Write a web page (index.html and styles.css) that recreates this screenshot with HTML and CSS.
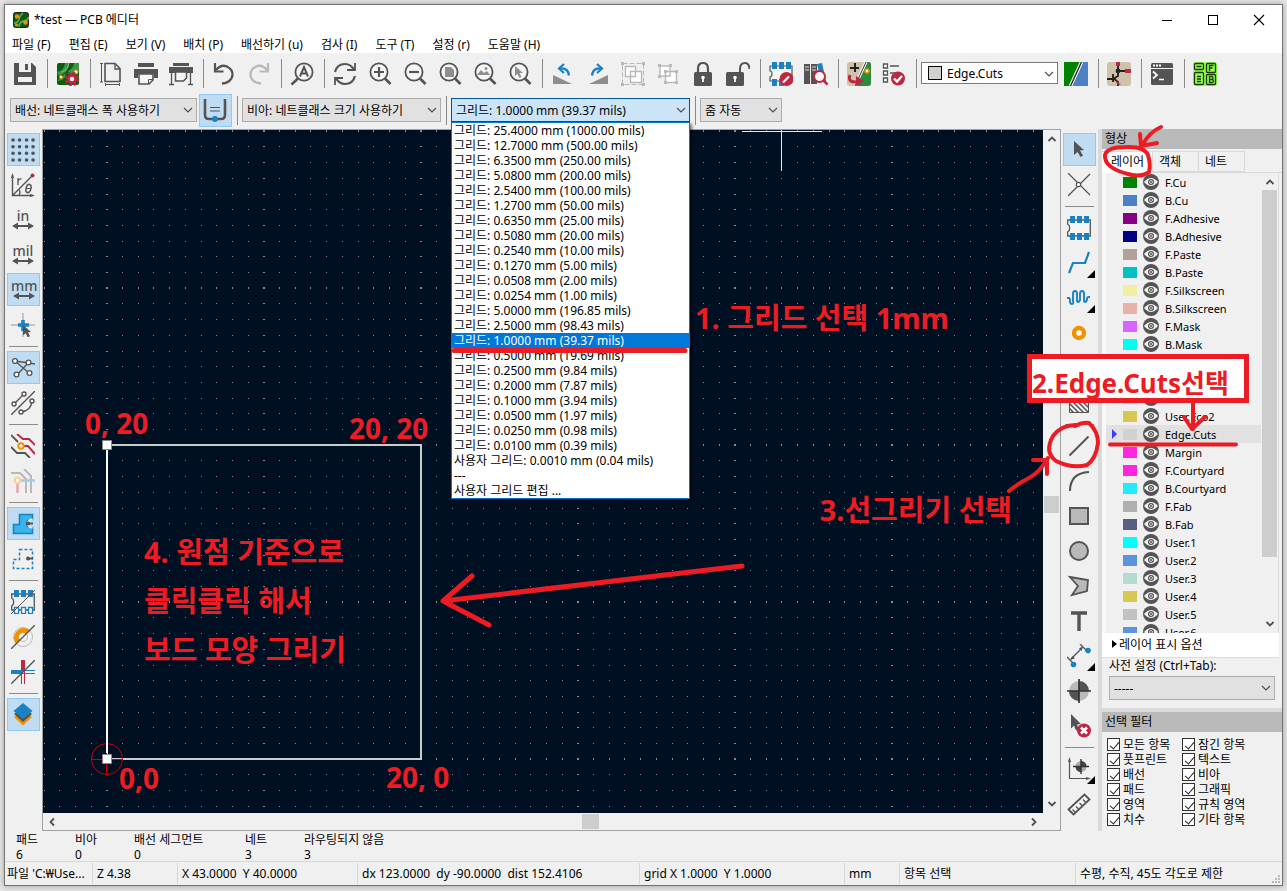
FILE: index.html
```html
<!DOCTYPE html>
<html lang="ko">
<head>
<meta charset="utf-8">
<title>*test — PCB 에디터</title>
<link rel="stylesheet" href="styles.css">
</head>
<body>
<svg class="defs" aria-hidden="true">
  <symbol id="eye" viewBox="0 0 16 16"><circle cx="8" cy="8" r="8" fill="#545454"/><path d="M1 8Q8 0 15 8Q8 16 1 8z" fill="#f0f0f0"/><circle cx="8" cy="8" r="3" fill="#545454"/><circle cx="8" cy="8" r="1.5" fill="#545454" stroke="#ddd" stroke-width=".9"/></symbol>
  <symbol id="chev" viewBox="0 0 10 6"><path d="M1 1l4 4 4-4" fill="none" stroke="#505050" stroke-width="1.2"/></symbol>
  <symbol id="lens" viewBox="0 0 24 24"><circle cx="11" cy="10" r="8.6" fill="#f5f5f5" stroke="#545454" stroke-width="1.8"/><path d="M17 16.500l5.500 5.500" stroke="#545454" stroke-width="2.600"/></symbol>
  <symbol id="arrows" viewBox="0 0 24 24"><path d="M4 19h16" stroke="#545454" stroke-width="2"/><path d="M1 19l6-3.500v7zM23 19l-6-3.500v7z" fill="#545454"/></symbol>
  <pattern id="dots" width="157" height="157" patternUnits="userSpaceOnUse" patternTransform="translate(107 131)">
    <g fill="none" stroke="#858b8e"><path id="dr" d="M0 .5h1M15 .5h1M31 .5h1M46 .5h1M62 .5h1M78 .5h1M94 .5h1M109 .5h1M125 .5h1M141 .5h1M156 .5h1"/>
    <use href="#dr" y="15"/><use href="#dr" y="31"/><use href="#dr" y="47"/><use href="#dr" y="63"/><use href="#dr" y="78"/><use href="#dr" y="94"/><use href="#dr" y="110"/><use href="#dr" y="125"/><use href="#dr" y="141"/><use href="#dr" y="156"/></g>
  </pattern>
  <pattern id="hatch" width="5" height="5" patternUnits="userSpaceOnUse"><path d="M0 0l5 5M-1 4l2 2M4-1l2 2" stroke="#545454" stroke-width="1.500"/></pattern>
</svg>

<div class="window">
  <header class="titlebar">
    <svg class="appicon" viewBox="0 0 16 16"><rect x=".5" y=".5" width="15" height="15" rx="2" fill="#075b12" stroke="#222"/><path d="M1 11q4 0 5-4t4-6M6 15q0-5 5-6t4-4" fill="none" stroke="#52a552" stroke-width="1.800"/><circle cx="4" cy="4.500" r="2.200" fill="#f29100"/><circle cx="3.500" cy="13" r="1.600" fill="#f29100"/><circle cx="12.500" cy="10.500" r="2.200" fill="#f29100"/></svg>
    <h1>*test — PCB 에디터</h1>
    <div class="winbtns">
      <button aria-label="최소화"><svg viewBox="0 0 12 12"><path d="M1 6.500h10" stroke="#000"/></svg></button>
      <button aria-label="최대화"><svg viewBox="0 0 12 12"><rect x="1.500" y="1.500" width="9" height="9" fill="none" stroke="#000"/></svg></button>
      <button aria-label="닫기"><svg viewBox="0 0 12 12"><path d="M1 1l10 10M11 1L1 11" stroke="#000" stroke-width="1.100"/></svg></button>
    </div>
  </header>
  <nav class="menubar">
    <button>파일 (F)</button><button>편집 (E)</button><button>보기 (V)</button><button>배치 (P)</button><button>배선하기 (u)</button><button>검사 (I)</button><button>도구 (T)</button><button>설정 (r)</button><button>도움말 (H)</button>
  </nav>

  <div class="toolbar main-tools">
    <button class="tool" aria-label="저장"><svg viewBox="0 0 24 24"><path d="M1 1h18l4 4v18H1z" fill="#545454"/><path d="M6 1h12v9H6zM5 15h14v5H5z" fill="#f0f0f0"/><path d="M12 2h3v6h-3z" fill="#545454"/></svg></button>
    <i class="sep"></i>
    <button class="tool" aria-label="보드 설정"><svg viewBox="0 0 24 24"><rect x="1" y="1" width="22" height="22" rx="2" fill="#0a5e10"/><path d="M1 10q7-1 8-9h4q0 9-10 13M12 9q5-2 6-8h5v8l-9 3M1 19q8 0 9-8" fill="#3f9446"/><path d="M13 1q-1 7-7 9" fill="none" stroke="#8cc08c"/><circle cx="5" cy="15" r="1.500" fill="#fff" stroke="#f29100"/><circle cx="20" cy="10" r="2" fill="#fff" stroke="#f29100"/><circle cx="16" cy="17" r="6" fill="none" stroke="#bf2641" stroke-width="2.500" stroke-dasharray="2.700 2"/><circle cx="16" cy="17" r="3.600" fill="#eee" stroke="#bf2641" stroke-width="2.600"/></svg></button>
    <i class="sep"></i>
    <button class="tool" aria-label="페이지 설정"><svg viewBox="0 0 24 24" fill="none" stroke="#545454"><path d="M6 1.500h10l5 5v13H6z" stroke-width="1.600"/><path d="M16 2v5h5" stroke-width="1.300"/><path d="M2.500 1v19M1 1.500h3M1 20h3M6 22.500h15M6.500 21v3M20.500 21v3"/></svg></button>
    <button class="tool" aria-label="인쇄"><svg viewBox="0 0 24 24"><path d="M4 1h16v4H4z" fill="#545454"/><path d="M0 7h24v9h-4v-4H4v4H0z" fill="#545454"/><path d="M5 12h14v6l-4 4H5z" fill="#f5f5f5" stroke="#545454" stroke-width="1.600"/><path d="M14.500 22v-4.500H19" fill="none" stroke="#545454"/></svg></button>
    <button class="tool" aria-label="플롯"><svg viewBox="0 0 24 24"><path d="M4 1h16v3H4zM0 5h24v6H0z" fill="#545454"/><path d="M2.500 11v12M21.500 11v12M0 22.500h5M19 22.500h5" stroke="#545454" stroke-width="1.300"/><path d="M6.500 10h11v6l-3 3h-8z" fill="#f5f5f5" stroke="#545454" stroke-width="1.500"/></svg></button>
    <i class="sep"></i>
    <button class="tool" aria-label="실행 취소"><svg viewBox="0 0 24 24" fill="none" stroke="#545454" stroke-width="2.300"><path d="M4 8Q9 2 15 4.500q6 3 5.500 9Q19 21 10 21.500"/><path d="M3 1v8.500h8.500" stroke-width="2.200"/></svg></button>
    <button class="tool" aria-label="다시 실행"><svg viewBox="0 0 24 24" fill="none" stroke="#b9b9b9" stroke-width="2.300"><path d="M20 8Q15 2 9 4.500q-6 3-5.500 9Q5 21 14 21.500"/><path d="M21 1v8.500h-8.500" stroke-width="2.200"/></svg></button>
    <i class="sep"></i>
    <button class="tool" aria-label="찾기"><svg viewBox="0 0 24 24"><circle cx="14" cy="10" r="8.600" fill="#f5f5f5" stroke="#545454" stroke-width="1.800"/><path d="M8 16.500L1.500 22.500" stroke="#545454" stroke-width="2.600"/><path d="M10 14.500l4-9.500 4 9.500M11.500 11.500h5" fill="none" stroke="#545454" stroke-width="2"/></svg></button>
    <i class="sep"></i>
    <button class="tool" aria-label="새로 고침"><svg viewBox="0 0 24 24" fill="none" stroke="#545454" stroke-width="2.200"><path d="M2 10Q4 2 12 2q6 0 9 6M22 14q-2 8-10 8-6 0-9-6"/><path d="M22 1v7h-8M2 23v-7h8" stroke-width="1.800"/></svg></button>
    <button class="tool" aria-label="확대"><svg viewBox="0 0 24 24"><use href="#lens"/><path d="M6 10h10M11 5v10" stroke="#545454" stroke-width="2.200"/></svg></button>
    <button class="tool" aria-label="축소"><svg viewBox="0 0 24 24"><use href="#lens"/><path d="M6 10h10" stroke="#545454" stroke-width="2.200"/></svg></button>
    <button class="tool" aria-label="화면에 맞추기"><svg viewBox="0 0 24 24"><use href="#lens"/><path d="M7 5h6l3 3v7H7z" fill="#8e8e8e"/></svg></button>
    <button class="tool" aria-label="객체에 맞추기"><svg viewBox="0 0 24 24"><use href="#lens"/><path d="M4 13l4-5 3 3 3-2 3 4z" fill="#8e8e8e"/><circle cx="13" cy="6.500" r="1.500" fill="#8e8e8e"/></svg></button>
    <button class="tool" aria-label="선택 확대"><svg viewBox="0 0 24 24"><use href="#lens"/><path d="M7 4l8 7h-3.500l2 4-2 1-2-4L7 14z" fill="#8e8e8e"/></svg></button>
    <i class="sep"></i>
    <button class="tool" aria-label="반시계 회전"><svg viewBox="0 0 24 24"><path d="M2 13l19 9H2z" fill="#8e8e8e"/><path d="M9 6.500q8-1 9 7" fill="none" stroke="#1a81c4" stroke-width="2.400"/><path d="M13 2L8 6.500l5 4.500" fill="none" stroke="#1a81c4" stroke-width="2.200"/></svg></button>
    <button class="tool" aria-label="시계 회전"><svg viewBox="0 0 24 24"><path d="M22 13L3 22h19z" fill="#8e8e8e"/><path d="M15 6.500q-8-1-9 7" fill="none" stroke="#1a81c4" stroke-width="2.400"/><path d="M11 2l5 4.500-5 4.500" fill="none" stroke="#1a81c4" stroke-width="2.200"/></svg></button>
    <button class="tool" aria-label="그룹"><svg viewBox="0 0 24 24" fill="#fff" stroke="#b9b9b9"><path d="M1.500 1.500h21v21h-21z" fill="none" stroke-dasharray="5 2"/><path d="M4.500 4.500h10v10h-10zM9.500 9.500h11v11h-11z" stroke-width="1.400"/><path d="M0 0h3v3H0zM21 0h3v3h-3zM0 21h3v3H0zM21 21h3v3h-3z" fill="#b9b9b9" stroke="none"/></svg></button>
    <button class="tool" aria-label="그룹 해제"><svg viewBox="0 0 24 24" fill="#fff" stroke="#b9b9b9"><path d="M4 4h10v10H4zM9.500 9.500h11v11h-11z" stroke-width="1.400"/><path d="M2 2h3v3H2zM13 2h3v3h-3zM2 13h3v3H2zM8 8h3v3H8zM19 8h3v3h-3zM8 19h3v3H8zM19 19h3v3h-3z" fill="#b9b9b9" stroke="none"/></svg></button>
    <button class="tool" aria-label="잠금"><svg viewBox="0 0 24 24"><path d="M7 12V7q0-6 5-6t5 6v5" fill="none" stroke="#545454" stroke-width="2.200"/><rect x="3" y="10" width="18" height="14" rx="1.500" fill="#545454"/><circle cx="12" cy="15.500" r="1.800" fill="#fff"/><path d="M12 15v5" stroke="#fff" stroke-width="1.800"/></svg></button>
    <button class="tool" aria-label="잠금 해제"><svg viewBox="0 0 24 24"><path d="M14 11V7q0-6 5-6 4 0 4.500 6" fill="none" stroke="#545454" stroke-width="2"/><rect x="0" y="10" width="18" height="14" rx="1.500" fill="#545454"/><circle cx="9" cy="15.500" r="1.800" fill="#fff"/><path d="M9 15v5" stroke="#fff" stroke-width="1.800"/></svg></button>
    <i class="sep"></i>
    <button class="tool" aria-label="풋프린트 편집기"><svg viewBox="0 0 24 24"><path d="M1 4h22v15H1v-4q2 0 2-3t-2-3z" fill="#f5f5f5" stroke="#545454" stroke-width="1.200"/><path d="M3 0h5v7H3zM10 0h5v7h-5zM17 0h5v7h-5zM3 17h5v7H3zM10 17h5v7h-5z" fill="#1a81c4"/><circle cx="17.500" cy="17" r="7" fill="#bf2641"/><path d="M14 20.500l6-6" stroke="#fff" stroke-width="2.200"/></svg></button>
    <button class="tool" aria-label="라이브러리 찾아보기"><svg viewBox="0 0 24 24"><path d="M0 2h6v20H0zM7 2h6v20H7z" fill="#545454"/><path d="M1 5h4M1 8h4M8 5h4M8 8h4" stroke="#ddd"/><path d="M13 2l5-1 4 18-5 1z" fill="#1a81c4"/><circle cx="15.500" cy="14.500" r="5.500" fill="#f5f5f5" stroke="#bf2641" stroke-width="2"/><path d="M19.500 18.500l4 4" stroke="#bf2641" stroke-width="2.600"/></svg></button>
    <i class="sep"></i>
    <button class="tool" aria-label="회로도에서 업데이트"><svg viewBox="0 0 24 24"><rect width="24" height="24" rx="3" fill="#cfc2a8"/><path d="M19 0h3q2 0 2 3v18q0 3-3 3H7z" fill="#2e8b3a"/><path d="M19 0L8 24" stroke="#fff" stroke-width="3"/><path d="M19 0L8 24" stroke="#333"/><path d="M8 1v9M3 6h9" stroke="#222" stroke-width="2"/><circle cx="20" cy="9" r="2" fill="#fff" stroke="#f29100" stroke-width="1.500"/><path d="M3 13q-3 8 8 7" fill="none" stroke="#bf2641" stroke-width="3"/><path d="M9 14l8 5-8 5z" fill="#bf2641"/></svg></button>
    <button class="tool" aria-label="설계 규칙 검사"><svg viewBox="0 0 24 24"><path d="M1.500 2h4v4h-4zM1.500 9h4v4h-4zM1.500 16h4v4h-4z" fill="#fff" stroke="#545454" stroke-width="1.300"/><path d="M8 4h9M8 11h5" stroke="#545454" stroke-width="1.500"/><circle cx="16" cy="16.500" r="7" fill="#bf2641"/><path d="M12 16.500l3 3 5-5.500" fill="none" stroke="#fff" stroke-width="2.400"/></svg></button>
    <i class="sep"></i>
    <span class="combo layer-combo"><i class="chip"></i><select aria-label="활성 레이어"><option>Edge.Cuts</option></select><svg class="chev"><use href="#chev"/></svg></span>
    <button class="tool" aria-label="레이어 쌍"><svg viewBox="0 0 24 24"><path d="M0 0h17L6 24H0z" fill="#008400"/><path d="M18 0h6v24H8z" fill="#4d7fc4"/><path d="M17.500 0L6.500 24" stroke="#fff" stroke-width="3.500"/><path d="M17.500 0L6.500 24" stroke="#333" stroke-width="1.500"/></svg></button>
    <i class="sep"></i>
    <button class="tool" aria-label="회로도 편집기"><svg viewBox="0 0 24 24"><rect width="24" height="24" rx="3" fill="#cfc2a8"/><path d="M11 4v5H18M11 9v5l-5 3H0M6 12v8M6 16l5 4v4" fill="none" stroke="#222" stroke-width="1.800"/><path d="M9 0h4v4H9zM18 7h6v4h-6zM9 18l5 5-4-1z" fill="#bf2641"/><circle cx="11" cy="9" r="2.400" fill="#222"/></svg></button>
    <i class="sep"></i>
    <button class="tool" aria-label="스크립트 콘솔"><svg viewBox="0 0 24 24"><rect x="1" y="1" width="22" height="22" rx="1.500" fill="#545454"/><path d="M1 6.500h22" stroke="#f0f0f0"/><path d="M3 3.500h2M6 3.500h2M9 3.500h2" stroke="#fff" stroke-width="1.800"/><path d="M3 9.500l4 3.500-4 3.500M9 17.500h5" fill="none" stroke="#fff" stroke-width="1.700"/></svg></button>
    <i class="sep"></i>
    <button class="tool" aria-label="플러그인"><svg viewBox="0 0 24 24"><rect width="24" height="24" rx="2.500" fill="#90ff4b"/><g fill="none" stroke="#1f3a10" stroke-width="1.300"><rect x="1.500" y="1.500" width="9" height="6" rx="1"/><rect x="1.500" y="10.500" width="9" height="12" rx="1"/><rect x="13.500" y="1.500" width="9" height="9" rx="1"/><rect x="13.500" y="12.500" width="9" height="10" rx="1"/><path d="M3.500 4.500h5M4 14.500h4M4 17h4M4 19.500h4M16.500 9V3.500h4M16.500 6h3M16.500 14.500v6h2.500q1.500 0 1.500-1.500t-1.500-1.500h-2.500 2q1.500 0 1.500-1.500t-1.500-1.500z"/></g></svg></button>
  </div>

  <div class="toolbar option-tools">
    <span class="combo w-track"><select aria-label="배선 폭"><option>배선: 네트클래스 폭 사용하기</option></select><svg class="chev"><use href="#chev"/></svg></span>
    <button class="tool on" aria-label="자동 폭"><svg viewBox="0 0 24 24"><path d="M2 0v16q0 4 4 4h12q4 0 4-4V0" fill="none" stroke="#545454" stroke-width="2.600"/><path d="M7 8.500h10M7 12h10" stroke="#545454" stroke-width="1.200"/><circle cx="12" cy="20" r="3" fill="#1a81c4"/></svg></button>
    <i class="sep"></i>
    <span class="combo w-via"><select aria-label="비아 크기"><option>비아: 네트클래스 크기 사용하기</option></select><svg class="chev"><use href="#chev"/></svg></span>
    <i class="sep"></i>
    <span class="combo w-grid open"><select aria-label="그리드"><option>그리드: 1.0000 mm (39.37 mils)</option></select><svg class="chev"><use href="#chev"/></svg>
      <ul class="dropdown" role="listbox" aria-label="그리드 목록">
        <li role="option">그리드: 25.4000 mm (1000.00 mils)</li>
        <li role="option">그리드: 12.7000 mm (500.00 mils)</li>
        <li role="option">그리드: 6.3500 mm (250.00 mils)</li>
        <li role="option">그리드: 5.0800 mm (200.00 mils)</li>
        <li role="option">그리드: 2.5400 mm (100.00 mils)</li>
        <li role="option">그리드: 1.2700 mm (50.00 mils)</li>
        <li role="option">그리드: 0.6350 mm (25.00 mils)</li>
        <li role="option">그리드: 0.5080 mm (20.00 mils)</li>
        <li role="option">그리드: 0.2540 mm (10.00 mils)</li>
        <li role="option">그리드: 0.1270 mm (5.00 mils)</li>
        <li role="option">그리드: 0.0508 mm (2.00 mils)</li>
        <li role="option">그리드: 0.0254 mm (1.00 mils)</li>
        <li role="option">그리드: 5.0000 mm (196.85 mils)</li>
        <li role="option">그리드: 2.5000 mm (98.43 mils)</li>
        <li role="option" aria-selected="true">그리드: 1.0000 mm (39.37 mils)</li>
        <li role="option">그리드: 0.5000 mm (19.69 mils)</li>
        <li role="option">그리드: 0.2500 mm (9.84 mils)</li>
        <li role="option">그리드: 0.2000 mm (7.87 mils)</li>
        <li role="option">그리드: 0.1000 mm (3.94 mils)</li>
        <li role="option">그리드: 0.0500 mm (1.97 mils)</li>
        <li role="option">그리드: 0.0250 mm (0.98 mils)</li>
        <li role="option">그리드: 0.0100 mm (0.39 mils)</li>
        <li role="option">사용자 그리드: 0.0010 mm (0.04 mils)</li>
        <li role="option">---</li>
        <li role="option">사용자 그리드 편집 ...</li>
      </ul>
    </span>
    <i class="sep"></i>
    <span class="combo w-zoom"><select aria-label="줌"><option>줌 자동</option></select><svg class="chev"><use href="#chev"/></svg></span>
  </div>

  <main class="workspace">
    <div class="sidebar left">
      <button class="tool on" aria-label="그리드 표시"><svg viewBox="0 0 24 24"><path d="M2 2h.1M8.500 2h.1M15.500 2h.1M22 2h.1M2 8.700h.1M8.500 8.700h.1M15.500 8.700h.1M22 8.700h.1M2 15.300h.1M8.500 15.300h.1M15.500 15.300h.1M22 15.300h.1M2 22h.1M8.500 22h.1M15.500 22h.1M22 22h.1" stroke="#545454" stroke-width="3.600" stroke-linecap="round"/></svg></button>
      <button class="tool" aria-label="극좌표"><svg viewBox="0 0 24 24" fill="none" stroke="#545454"><path d="M1.500 2v20.500H22M2 22L21 3" stroke-width="1.400"/><path d="M1.500 0l-1.500 5h3zM24 22.500l-5-1.500v3z" fill="#545454" stroke="none"/><path d="M7 5v7M7 8q1-2.500 3.500-2M8 17q2 2 0 5" stroke-width="1.300"/><ellipse cx="17.500" cy="15.500" rx="2.400" ry="4.200" stroke-width="1.500" transform="rotate(15 17.500 15.500)"/><path d="M15 15.500h5"/><circle cx="21.500" cy="2.500" r="2" fill="#bf2641" stroke="none"/></svg></button>
      <button class="tool unit"><span>in</span><svg viewBox="0 0 24 24"><use href="#arrows"/></svg></button>
      <button class="tool unit"><span>mil</span><svg viewBox="0 0 24 24"><use href="#arrows"/></svg></button>
      <button class="tool unit on"><span>mm</span><svg viewBox="0 0 24 24"><use href="#arrows"/></svg></button>
      <button class="tool" aria-label="전체 커서"><svg viewBox="0 0 24 24"><path d="M0 12h24M12 0v24" stroke="#999"/><path d="M7 12h11M12 7v11" stroke="#1a81c4" stroke-width="3.600"/><path d="M12 12l8 7-3 .3 2 4-2.300 1-2-4-2.700 2z" fill="#545454"/></svg></button>
      <i class="hsep"></i>
      <button class="tool on" aria-label="래츠네스트"><svg viewBox="0 0 24 24" fill="#fff" stroke="#545454" stroke-width="1.300"><path d="M4 5l14 2 6 1M4 5l14 12M6 19L17 7" fill="none"/><circle cx="4" cy="5" r="2.400"/><circle cx="17.500" cy="6.500" r="2.400"/><circle cx="5.500" cy="18.500" r="2.400"/><circle cx="18.500" cy="17" r="2.400"/></svg></button>
      <button class="tool" aria-label="곡선 래츠네스트"><svg viewBox="0 0 24 24" fill="#fff" stroke="#545454" stroke-width="1.400"><path d="M3 13L13 3M10 21q10-1 11-11M0 24L24 0" fill="none"/><circle cx="13" cy="3" r="2"/><circle cx="3" cy="13" r="2"/><circle cx="21" cy="10" r="2"/><circle cx="10" cy="21" r="2"/></svg></button>
      <i class="hsep"></i>
      <button class="tool" aria-label="고대비"><svg viewBox="0 0 24 24" fill="none" stroke-width="1.900"><path d="M6 0l6 5h6l6 6M12 12h5l7 8" stroke="#bf2641"/><path d="M0 1l7 7M0 13l6 6h8l5 5" stroke="#545454"/><circle cx="10" cy="12" r="2.700" stroke="#f29100"/></svg></button>
      <button class="tool" aria-label="네트 강조"><svg viewBox="0 0 24 24" fill="none" stroke="#b9b9b9" stroke-width="2"><path d="M0 4h9l6 6v14M13 0l7 7v17"/><path d="M9 11.500h15" stroke="#a2cbe6" stroke-width="2.600"/><path d="M6.500 14v10" stroke="#e5a8b3" stroke-width="2.600"/><circle cx="6.500" cy="11.500" r="2.700" fill="#fff" stroke="#fad08e"/></svg></button>
      <i class="hsep"></i>
      <button class="tool on" aria-label="영역 채움"><svg viewBox="0 0 24 24"><path d="M8.500 2.500h13v5q-6 0-6 4t6 4v6h-19v-9h6z" fill="#39b4ea" stroke="#1a81c4" stroke-width="1.600"/><path d="M21.500 7q-5 0-5 4.500t5 4.500" fill="#c0dcf3" stroke="#fff"/><path d="M17 11.500h5" stroke="#545454" stroke-width="2"/><circle cx="17" cy="11.500" r="2" fill="#545454"/></svg></button>
      <button class="tool" aria-label="영역 윤곽"><svg viewBox="0 0 24 24"><path d="M8.500 2.500h13v19h-19v-9h6z" fill="none" stroke="#1a81c4" stroke-width="1.500" stroke-dasharray="3 2"/><path d="M17 11.500h5" stroke="#545454" stroke-width="2"/><circle cx="17" cy="11.500" r="2" fill="#545454"/></svg></button>
      <i class="hsep"></i>
      <button class="tool" aria-label="패드 윤곽"><svg viewBox="0 0 24 24"><path d="M.7 4h22.600v16H.7v-4q2-1 2-4t-2-4z" fill="none" stroke="#545454" stroke-width="1.300"/><path d="M3 0h5v7H3zM10 0h5v7h-5zM17 0h5v7h-5z" fill="#1a81c4"/><path d="M3.500 17.500h4v6h-4zM10.500 17.500h4v6h-4zM17.500 17.500h4v6h-4z" fill="#fff" stroke="#1a81c4" stroke-width="1.300"/><path d="M0 24L24 0" stroke="#545454"/></svg></button>
      <button class="tool" aria-label="비아 윤곽"><svg viewBox="0 0 24 24"><circle cx="12" cy="12" r="9.500" fill="none" stroke="#bbb"/><circle cx="12" cy="12" r="4.500" fill="none" stroke="#bbb"/><path d="M5 19A10 10 0 0 1 19 5l-4 4a4 4 0 0 0-6 6z" fill="#f29100"/><path d="M0 24L24 0" stroke="#545454" stroke-width="1.300"/></svg></button>
      <button class="tool" aria-label="배선 윤곽"><svg viewBox="0 0 24 24"><path d="M12 0v12" stroke="#bf2641" stroke-width="4"/><path d="M0 12h12" stroke="#1a81c4" stroke-width="4"/><path d="M12 10.500h12M12 13.500h12" stroke="#1a81c4"/><path d="M10.500 12v12M13.500 12v12" stroke="#bf2641"/><path d="M0 24L24 0" stroke="#545454" stroke-width="1.300"/></svg></button>
      <i class="hsep"></i>
      <button class="tool on" aria-label="레이어 관리자"><svg viewBox="0 0 24 24"><path d="M3 14l3-2 6 4 6-4 3 2-9 8.500z" fill="#f29100"/><path d="M3 11l3-2 6 4 6-4 3 2-9 8z" fill="#545454"/><path d="M12 0l9.500 8L12 16 2.500 8z" fill="#1a81c4"/></svg></button>
    </div>

    <section class="editor">
      <div class="canvas">
        <svg width="100%" height="100%"><g transform="translate(-43 -130)">
          <rect x="43" y="130" width="3000" height="2000" fill="url(#dots)" shape-rendering="crispEdges"/>
          <path d="M107 445h314v314H107" fill="none" stroke="#c9cdc9" stroke-width="2"/>
          <path d="M107 445v314" stroke="#fff" stroke-width="2"/>
          <circle cx="107" cy="759" r="15.500" fill="none" stroke="#c80000"/><path d="M91 759.500h32M106.500 743v32" stroke="#c80000"/><path d="M106 445h2v308h-2z" fill="#fff"/>
          <path d="M102.500 440.500h9v9h-9zM102.500 754.500h9v9h-9z" fill="#fff" stroke="#888"/>
          <path d="M742 131.500h80M781.500 130v41" stroke="#e8e8e8"/>
        </g></svg>
      </div>
      <div class="scroll v"><svg viewBox="0 0 10 10"><path d="M1.500 7L5 3.500 8.500 7"/></svg><i></i><svg viewBox="0 0 10 10"><path d="M1.500 3L5 6.500 8.500 3"/></svg></div>
      <div class="scroll h"><svg viewBox="0 0 10 10"><path d="M7 1.500L3.500 5 7 8.500"/></svg><i></i><svg viewBox="0 0 10 10"><path d="M3 1.500L6.500 5 3 8.500"/></svg></div>
      <i class="corner"></i>
    </section>

    <div class="sidebar right">
      <button class="tool on" aria-label="선택"><svg viewBox="0 0 24 24"><path d="M7 3l10 9-4 .5 3 5-2.500 1.500-3-5-3.500 3z" fill="#545454"/></svg></button>
      <button class="tool" aria-label="로컬 래츠네스트"><svg viewBox="0 0 24 24" fill="none" stroke="#545454" stroke-width="1.200"><path d="M1 0l22 22M23 1L1 23"/><circle cx="11.500" cy="11.500" r="2.200" fill="#fff"/></svg></button>
      <i class="hsep"></i>
      <button class="tool" aria-label="풋프린트 추가"><svg viewBox="0 0 24 24"><path d="M.7 4h22.600v16H.7v-4q2-1 2-4t-2-4z" fill="#f5f5f5" stroke="#545454" stroke-width="1.300"/><path d="M3 0h5v7H3zM10 0h5v7h-5zM17 0h5v7h-5zM3 17h5v7H3zM10 17h5v7h-5zM17 17h5v7h-5z" fill="#1a81c4"/></svg></button>
      <button class="tool more" aria-label="배선"><svg viewBox="0 0 24 24"><path d="M2 22L6 12h12l4-11" fill="none" stroke="#1a81c4" stroke-width="2.200"/></svg></button>
      <button class="tool more" aria-label="길이 조정"><svg viewBox="0 0 24 24"><path d="M0 12h2q1 0 1 3t2 3 1-3V8q0-3 2-3t2 3v6q0 2 1 2t2-2V8q0-3 2-3t2 3v6q0 2 1 2t2-2v-1q0-2 2-2h1" fill="none" stroke="#1a81c4" stroke-width="1.900"/></svg></button>
      <button class="tool" aria-label="비아"><svg viewBox="0 0 24 24"><circle cx="12" cy="12" r="5" fill="#fff" stroke="#f29100" stroke-width="4.400"/></svg></button>
      <button class="tool" aria-label="영역"><svg viewBox="0 0 24 24"><path d="M3 3h18v18H3z" fill="none" stroke="#545454"/></svg></button>
      <button class="tool" aria-label="규칙 영역"><svg viewBox="0 0 24 24"><path d="M2.500 2.500h19v19h-19z" fill="url(#hatch)" stroke="#545454"/></svg></button>
      <i class="hsep"></i>
      <button class="tool" aria-label="선"><svg viewBox="0 0 24 24"><path d="M2.500 21.500l19-19" stroke="#545454" stroke-width="2"/></svg></button>
      <button class="tool" aria-label="호"><svg viewBox="0 0 24 24"><path d="M3 22Q3 4 22 3" fill="none" stroke="#545454" stroke-width="2"/></svg></button>
      <button class="tool" aria-label="사각형"><svg viewBox="0 0 24 24"><path d="M3 4h18v16H3z" fill="#b9b9b9" stroke="#545454" stroke-width="2"/></svg></button>
      <button class="tool" aria-label="원"><svg viewBox="0 0 24 24"><circle cx="12" cy="12" r="9" fill="#b9b9b9" stroke="#545454" stroke-width="2"/></svg></button>
      <button class="tool" aria-label="다각형"><svg viewBox="0 0 24 24"><path d="M3 3l18 3-1 11-15 4 6-9z" fill="#b9b9b9" stroke="#545454" stroke-width="1.800"/></svg></button>
      <button class="tool" aria-label="텍스트"><svg viewBox="0 0 24 24"><path d="M4 4h16M12 4v18" stroke="#545454" stroke-width="3.400"/></svg></button>
      <button class="tool more" aria-label="치수선"><svg viewBox="0 0 24 24"><path d="M4 15L15 4M0 13l8 8M13 0l9 9" stroke="#545454" stroke-width="1.300" fill="none"/><path d="M16 2l-1.500 5L12 4.500zM3 16l5-1.500L5.500 12z" fill="#545454"/><circle cx="21" cy="6.500" r="2.800" fill="#1a81c4"/><circle cx="6.500" cy="20.500" r="2.800" fill="#1a81c4"/></svg></button>
      <button class="tool" aria-label="정렬 마커"><svg viewBox="0 0 24 24"><circle cx="12" cy="12" r="10" fill="#b9b9b9"/><path d="M12 12V2a10 10 0 0 1 10 10zM12 12v10A10 10 0 0 1 2 12z" fill="#545454"/><path d="M0 12h24M12 0v24" stroke="#333" stroke-width="1.700"/></svg></button>
      <button class="tool" aria-label="삭제"><svg viewBox="0 0 24 24"><path d="M4 0l10 10-4 .5 2 5-3 1-2-5-3 3z" fill="#545454"/><circle cx="17" cy="16.500" r="7" fill="#bf2641"/><path d="M14 13.500l6 6M20 13.500l-6 6" stroke="#fff" stroke-width="2.600"/></svg></button>
      <i class="hsep"></i>
      <button class="tool more" aria-label="원점"><svg viewBox="0 0 24 24"><path d="M2.500 3v18.500H22" fill="none" stroke="#545454" stroke-width="1.200"/><path d="M2.500 0L1 5h3zM24 21.500L19 20v3z" fill="#545454"/><circle cx="14" cy="9.500" r="5.500" fill="#aaa"/><path d="M14 9.500V4a5.500 5.500 0 0 1 5.500 5.500zM14 9.500V15a5.500 5.500 0 0 1-5.500-5.500z" fill="#444"/><path d="M6 9.500h16M14 2v15" stroke="#333" stroke-width="1.400"/></svg></button>
      <button class="tool" aria-label="측정"><svg viewBox="0 0 24 24"><path d="M1.500 17.500l16-15 5 5-16 15z" fill="#f5f5f5" stroke="#545454" stroke-width="1.800"/><path d="M8 20l-2.500-2.500M11.500 17l-2.500-2.500M15 13.500L12.500 11M18.500 10L16 7.500" stroke="#545454" stroke-width="1.400"/></svg></button>
    </div>

    <aside class="panel">
      <h2>형상</h2>
      <div class="tabs" role="tablist"><button role="tab" aria-selected="true">레이어</button><button role="tab">객체</button><button role="tab">네트</button></div>
      <div class="layers">
        <div class="list">
          <div class="row"><i style="background:#008400"></i><svg><use href="#eye"/></svg><span>F.Cu</span></div>
          <div class="row"><i style="background:#4d7fc4"></i><svg><use href="#eye"/></svg><span>B.Cu</span></div>
          <div class="row"><i style="background:#840084"></i><svg><use href="#eye"/></svg><span>F.Adhesive</span></div>
          <div class="row"><i style="background:#000084"></i><svg><use href="#eye"/></svg><span>B.Adhesive</span></div>
          <div class="row"><i style="background:#b4a09a"></i><svg><use href="#eye"/></svg><span>F.Paste</span></div>
          <div class="row"><i style="background:#00c2c2"></i><svg><use href="#eye"/></svg><span>B.Paste</span></div>
          <div class="row"><i style="background:#f2eda1"></i><svg><use href="#eye"/></svg><span>F.Silkscreen</span></div>
          <div class="row"><i style="background:#e8b2a7"></i><svg><use href="#eye"/></svg><span>B.Silkscreen</span></div>
          <div class="row"><i style="background:#d864ff"></i><svg><use href="#eye"/></svg><span>F.Mask</span></div>
          <div class="row"><i style="background:#02ffee"></i><svg><use href="#eye"/></svg><span>B.Mask</span></div>
          <div class="row"></div>
          <div class="row"></div>
          <div class="row"><i style="background:#b4dbd2"></i><svg><use href="#eye"/></svg></div>
          <div class="row"><i style="background:#d8c852"></i><svg><use href="#eye"/></svg><span>User.Eco2</span></div>
          <div class="row current"><i style="background:#d0d2cd"></i><svg><use href="#eye"/></svg><span>Edge.Cuts</span></div>
          <div class="row"><i style="background:#ff26e2"></i><svg><use href="#eye"/></svg><span>Margin</span></div>
          <div class="row"><i style="background:#ff26e2"></i><svg><use href="#eye"/></svg><span>F.Courtyard</span></div>
          <div class="row"><i style="background:#26e9ff"></i><svg><use href="#eye"/></svg><span>B.Courtyard</span></div>
          <div class="row"><i style="background:#afafaf"></i><svg><use href="#eye"/></svg><span>F.Fab</span></div>
          <div class="row"><i style="background:#585d84"></i><svg><use href="#eye"/></svg><span>B.Fab</span></div>
          <div class="row"><i style="background:#00ffff"></i><svg><use href="#eye"/></svg><span>User.1</span></div>
          <div class="row"><i style="background:#5994dc"></i><svg><use href="#eye"/></svg><span>User.2</span></div>
          <div class="row"><i style="background:#b4dbd2"></i><svg><use href="#eye"/></svg><span>User.3</span></div>
          <div class="row"><i style="background:#d8c852"></i><svg><use href="#eye"/></svg><span>User.4</span></div>
          <div class="row"><i style="background:#c2c2c2"></i><svg><use href="#eye"/></svg><span>User.5</span></div>
          <div class="row"><i style="background:#5994dc"></i><svg><use href="#eye"/></svg><span>User.6</span></div>
        </div>
        <div class="scroll list-scroll"><svg viewBox="0 0 10 10"><path d="M1.500 7L5 3.500 8.500 7"/></svg><i></i><svg viewBox="0 0 10 10"><path d="M1.500 3L5 6.500 8.500 3"/></svg></div>
      </div>
      <button class="display-opts"><svg viewBox="0 0 5 8"><path d="M0 0l5 4-5 4z"/></svg>레이어 표시 옵션</button>
      <div class="preset">
        <label for="preset">사전 설정 (Ctrl+Tab):</label>
        <span class="combo"><select id="preset"><option>-----</option></select><svg class="chev"><use href="#chev"/></svg></span>
      </div>
      <h2 class="filter-title">선택 필터</h2>
      <div class="filters">
        <label><input type="checkbox" checked>모든 항목</label><label><input type="checkbox" checked>잠긴 항목</label>
        <label><input type="checkbox" checked>풋프린트</label><label><input type="checkbox" checked>텍스트</label>
        <label><input type="checkbox" checked>배선</label><label><input type="checkbox" checked>비아</label>
        <label><input type="checkbox" checked>패드</label><label><input type="checkbox" checked>그래픽</label>
        <label><input type="checkbox" checked>영역</label><label><input type="checkbox" checked>규칙 영역</label>
        <label><input type="checkbox" checked>치수</label><label><input type="checkbox" checked>기타 항목</label>
      </div>
    </aside>
  </main>

  <dl class="messages">
    <div><dt>패드</dt><dd>6</dd></div><div><dt>비아</dt><dd>0</dd></div><div class="wide"><dt>배선 세그먼트</dt><dd>0</dd></div><div><dt>네트</dt><dd>3</dd></div><div class="wide"><dt>라우팅되지 않음</dt><dd>3</dd></div>
  </dl>
  <footer class="status">
    <span>파일 'C:₩Use...</span><span>Z 4.38</span><span>X 43.0000&nbsp; Y 40.0000</span><span>dx 123.0000&nbsp; dy -90.0000&nbsp; dist 152.4106</span><span>grid X 1.0000&nbsp; Y 1.0000</span><span>mm</span><span>항목 선택</span><span>수평, 수직, 45도 각도로 제한</span>
    <svg class="grip" viewBox="0 0 8 8"><path d="M6 0h2v2H6zM3 3h2v2H3zM6 3h2v2H6zM0 6h2v2H0zM3 6h2v2H3zM6 6h2v2H6z" fill="#bbb"/></svg>
  </footer>
</div>

<div class="notes notes-left">
  <svg width="1000" height="891"><path d="M454 350.500h231M742 566L443 601M472 576l-29 25 46 24"/></svg>
  <p class="coord top-left">0, 20</p>
  <p class="coord top-right">20, 20</p>
  <p class="coord bottom-left">0,0</p>
  <p class="coord bottom-right">20, 0</p>
  <p class="step1">1. 그리드 선택 1mm</p>
  <p class="step4">4. 원점 기준으로<br>클릭클릭 해서<br>보드 모양 그리기</p>
</div>
<div class="notes notes-right">
  <svg width="487" height="891" viewBox="800 0 487 891">
    <path d="M1105 155q2-8 21-8 18-1 22 8 3 10 1 17-9 6-21 2-24-6-23-19z" stroke-width="4"/>
    <path d="M1161 127q-12 5-19 19M1140 134l1 12 16-3" stroke-width="4"/>
    <path d="M1078 425q-16-1-25 11-9 16 3 25 16 8 31 4 9-6 11-22 0-12-9-20-6-1-14 3" stroke-width="4"/>
    <path d="M1009 491q10-8 20-13t19-20M1033 460h14l0 14" stroke-width="4"/>
    <path d="M1193 403v26M1184 417l8 12 13-12M1110 444.500h126" stroke-width="4"/>
  </svg>
  <p class="step2">2.Edge.Cuts선택</p>
  <p class="step3">3.선그리기 선택</p>
</div>
</body>
</html>
```
FILE: styles.css
```css
* { box-sizing: border-box; }
body {
  margin: 0; padding: 4px 4px 5px; height: 100vh; position: relative; overflow: hidden;
  background: #e6e6e6; color: #000;
  font: 12px/15px "Noto Sans", "Noto Sans CJK KR", sans-serif;
}
button, select, input { font: inherit; color: inherit; margin: 0; }
button { border: 0; background: none; padding: 0; }
h1, h2, p, ul, dl, dd { margin: 0; padding: 0; font-weight: 400; font-size: 12px; }
svg { display: block; }
.defs { position: absolute; width: 0; height: 0; }

.window {
  height: 100%; display: flex; flex-direction: column;
  border: 1px solid #737373; background: #f0f0f0; box-shadow: 0 0 6px #999;
}
.titlebar { display: flex; align-items: center; height: 29px; background: #fff; padding-left: 8px; gap: 5px; flex: none; }
.appicon { width: 16px; height: 16px; }
.titlebar h1 { flex: 1; }
.winbtns { display: flex; }
.winbtns button { width: 46px; height: 28px; display: grid; place-items: center; }
.winbtns svg { width: 12px; height: 12px; }
.menubar { display: flex; gap: 18px; height: 19px; padding-left: 7px; background: #fff; flex: none; }
.menubar button { height: 19px; white-space: nowrap; padding-top: 1px; }

.toolbar { display: flex; align-items: center; gap: 2px; flex: none; }
.main-tools { height: 40px; padding-left: 4px; }
.option-tools { height: 36px; padding: 0 0 2px 5px; }
.tool { width: 33px; height: 33px; flex: none; display: grid; place-content: start; padding: 4px 3px 0; border: 1px solid transparent; position: relative; }
.tool svg { width: 24px; height: 24px; }
.tool.on { background: #c0dcf3; border-color: #90c8f6; }
.sep { width: 6px; height: 29px; flex: none; display: flex; justify-content: center; }
.sep::before { content: ""; width: 1px; background: #8a8a8a; }
.more::after { content: ""; position: absolute; right: 0; bottom: 0; border: 4px solid; border-color: transparent #000 #000 transparent; }

.combo { position: relative; display: block; height: 24px; flex: none; }
.combo select {
  appearance: none; width: 100%; height: 24px; padding: 0 18px 0 4px; border: 1px solid #adadad; border-radius: 0;
  background: #e1e1e1; outline: 0;
}
.chev { position: absolute; right: 4px; top: 9px; width: 10px; height: 6px; pointer-events: none; }
.layer-combo { width: 137px; height: 22px; }
.layer-combo select { background: #fff; border-color: #7a7a7a; padding-left: 25px; height: 22px; }
.chip { position: absolute; left: 7px; top: 4px; width: 14px; height: 14px; border: 1px solid #000; background: #d0d2cd; }
.w-track { width: 187px; }
.w-via { width: 199px; }
.w-grid { width: 239px; }
.w-zoom { width: 82px; }
.open select { background: #cce4f7; border-color: #005499; }
.dropdown {
  position: absolute; z-index: 5; left: 0; right: 0; top: 24px; list-style: none;
  background: #fff; border: 1px solid #0078d7; box-shadow: 2px 2px 3px #0008;
}
.dropdown li { height: 15px; padding-left: 2px; white-space: nowrap; }
.dropdown [aria-selected] { background: #0078d7; color: #fff; }

.workspace { flex: 1; min-height: 0; display: flex; }
.sidebar { flex: none; display: flex; flex-direction: column; align-items: center; gap: 2px; padding-top: 4px; width: 37px; }
.hsep { width: 29px; height: 6px; flex: none; display: flex; align-items: center; }
.hsep::before { content: ""; flex: 1; height: 1px; background: #8a8a8a; }
.unit { justify-items: center; padding-top: 3px; }
.unit span { grid-area: 1 / 1; font-size: 14px; line-height: 18px; font-weight: 500; color: #545454; }
.unit svg { grid-area: 1 / 1; }

.editor {
  flex: 1; min-width: 0; display: grid; grid-template: 1fr 17px / 1fr 17px;
  border: 1px solid #a0a0a0;
}
.canvas { background: #001023; overflow: hidden; min-height: 0; min-width: 0; }
.scroll { display: flex; align-items: center; justify-content: space-between; background: #f0f0f0; }
.scroll svg { width: 10px; height: 10px; fill: none; stroke: #505050; stroke-width: 1.8; }
.scroll i { background: #cdcdcd; }
.scroll.v { flex-direction: column; padding: 4px 0; }
.scroll.v i { width: 15px; height: 17px; margin-top: 66px; }
.scroll.h { padding: 0 4px; }
.scroll.h i { width: 17px; height: 15px; margin-left: 94px; }

.panel { width: 184px; flex: none; border-left: 4px solid #dadada; display: flex; flex-direction: column; }
.panel h2 { height: 20px; line-height: 19px; padding-left: 3px; background: #b9b9b9; flex: none; }
.tabs { display: flex; height: 24px; padding: 2px 0 0; flex: none; border-bottom: 1px solid #d9d9d9; }
.tabs button { width: 46px; border: 1px solid #d9d9d9; border-left: 0; height: 21px; text-align: left; padding-left: 6px; }
.tabs [aria-selected] { width: 51px; background: #fff; height: 22px; border-bottom: 0; padding: 0 0 2px 9px; }
.layers { flex: 1; min-height: 0; display: flex; margin-right: 3px; border-right: 1px solid #ddd; border-left: 4px solid #f9f9f9; }
.list { flex: 1; overflow: hidden; font-size: 11px; }
.row { display: grid; grid-template-columns: 14px 16px 1fr; column-gap: 6px; align-items: center; height: 18px; padding-left: 17px; position: relative; }
.row i { height: 11px; }
.row svg { width: 16px; height: 16px; }
.current { background: #e1e1e1; }
.current::before { content: ""; position: absolute; left: 6px; top: 4px; border: 5px solid transparent; border-left-color: #3c3cff; border-right: 0; }
.list-scroll { width: 17px; flex-direction: column; padding: 4px 0; }
.list-scroll i { width: 15px; flex: 1; margin: 3px 0 62px; }
.display-opts { display: flex; align-items: center; gap: 2px; height: 25px; padding: 0 0 2px 10px; background: #fff; margin-right: 3px; border-bottom: 1px solid #ddd; flex: none; }
.display-opts svg { width: 5px; height: 8px; }
.preset { height: 50px; padding: 0 7px; flex: none; }
.preset label { display: block; height: 18px; }
.panel .filter-title { height: 24px; border-top: 4px solid #dadada; }
.filters { display: grid; grid-template-columns: 75px 1fr; grid-auto-rows: 15px; padding: 5px 0 4px 5px; flex: none; }
.filters label { display: flex; align-items: center; gap: 3px; white-space: nowrap; }
.filters input { appearance: none; width: 13px; height: 13px; border: 1px solid #333; background: #fff; position: relative; flex: none; }
.filters input:checked::before { content: ""; position: absolute; left: 4px; top: 1px; width: 4px; height: 8px; border: solid #222; border-width: 0 1px 1px 0; transform: rotate(40deg); }

.messages { display: flex; height: 31px; padding: 1px 0 0 11px; border-bottom: 1px solid #d7d7d7; flex: none; }
.messages div { width: 59px; white-space: nowrap; }
.messages .wide { width: 111px; }
.status { position: relative; display: grid; grid-template-columns: 88px 85px 180px 282px 205px 55px 176px 1fr; height: 23px; padding: 1px 0; line-height: 21px; flex: none; }
.status span { padding-left: 4px; border-right: 1px solid #d7d7d7; white-space: nowrap; }
.status span:first-child { padding-left: 2px; }
.status span:last-of-type { border: 0; }
.grip { position: absolute; right: 2px; bottom: 2px; width: 8px; height: 8px; }

.notes { position: absolute; top: 0; z-index: 10; pointer-events: none; color: #ed1c24; }
.notes-left { left: 0; }
.notes-right { right: 0; }
.notes svg { fill: none; stroke: #ed1c24; stroke-width: 5; stroke-linecap: round; stroke-linejoin: round; }
.notes p { position: absolute; font-size: 29px; line-height: 49px; font-weight: 700; white-space: nowrap; }
.notes .coord { font-size: 28px; line-height: 32px; }
.top-left { left: 85px; top: 407px; }
.top-right { left: 349px; top: 412px; }
.bottom-left { left: 119px; top: 762px; }
.bottom-right { left: 386px; top: 761px; }
.step1 { left: 695px; top: 293px; }
.step4 { left: 144px; top: 527px; }
.notes .step2 { right: 38px; top: 354px; width: 222px; height: 49px; border: 5px solid #ed1c24; background: #fff; font-size: 26px; line-height: 48px; }
.step3 { right: 275px; top: 485px; }
```
